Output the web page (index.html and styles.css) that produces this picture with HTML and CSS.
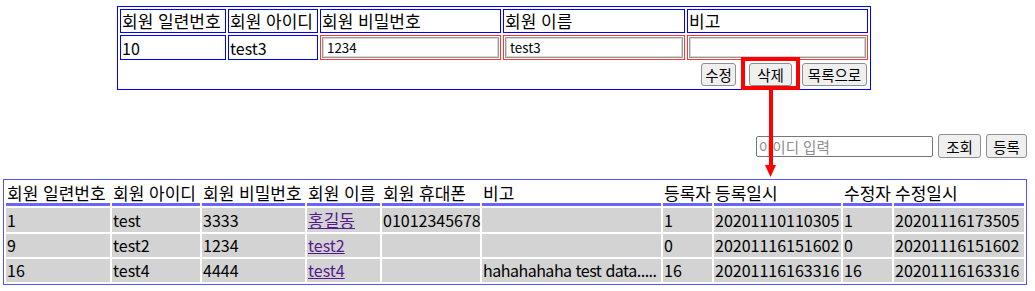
FILE: index.html
```html
<!DOCTYPE html>
<html lang="ko">
<head>
  <meta charset="UTF-8" />
  <title>회원 관리</title>
  <link rel="stylesheet" href="styles.css">
</head>
<body>

<div class="wrap">

  <table class="edit">
    <tr>
      <th class="e-no">회원 일련번호</th>
      <th class="e-id">회원 아이디</th>
      <th class="e-pw">회원 비밀번호</th>
      <th class="e-name">회원 이름</th>
      <th class="e-memo">비고</th>
    </tr>
    <tr>
      <td>10</td>
      <td>test3</td>
      <td class="field"><input type="text" id="user_pw" value="1234"></td>
      <td class="field"><input type="text" id="user_name" value="test3"></td>
      <td class="field"><input type="text" id="user_memo" value=""></td>
    </tr>
    <tr>
      <td colspan="5" class="actions">
        <div class="botonera">
          <button type="button" class="btn-edit">수정</button>
          <button type="button" class="btn-del">삭제</button>
          <button type="button" class="btn-list">목록으로</button>
        </div>
      </td>
    </tr>
  </table>

  <div class="search">
    <input type="text" id="search_id" placeholder="아이디 입력">
    <button type="button" class="btn-find">조회</button>
    <button type="button" class="btn-add">등록</button>
  </div>

  <table class="list">
    <tr>
      <th class="l-no">회원 일련번호</th>
      <th class="l-id">회원 아이디</th>
      <th class="l-pw">회원 비밀번호</th>
      <th class="l-name">회원 이름</th>
      <th class="l-phone">회원 휴대폰</th>
      <th class="l-memo">비고</th>
      <th class="l-reg">등록자</th>
      <th class="l-regdate">등록일시</th>
      <th class="l-mod">수정자</th>
      <th class="l-moddate">수정일시</th>
    </tr>
    <tr>
      <td>1</td>
      <td>test</td>
      <td>3333</td>
      <td><a href="#" class="ko">홍길동</a></td>
      <td>01012345678</td>
      <td></td>
      <td>1</td>
      <td>20201110110305</td>
      <td>1</td>
      <td>20201116173505</td>
    </tr>
    <tr>
      <td>9</td>
      <td>test2</td>
      <td>1234</td>
      <td><a href="#">test2</a></td>
      <td></td>
      <td></td>
      <td>0</td>
      <td>20201116151602</td>
      <td>0</td>
      <td>20201116151602</td>
    </tr>
    <tr>
      <td>16</td>
      <td>test4</td>
      <td>4444</td>
      <td><a href="#">test4</a></td>
      <td></td>
      <td class="memo">hahahahaha test data.....</td>
      <td>16</td>
      <td>20201116163316</td>
      <td>16</td>
      <td>20201116163316</td>
    </tr>
  </table>

  <!-- 삭제 버튼 표시 -->
  <svg class="mark" width="60" height="121" viewBox="0 0 60 121">
    <rect x="2" y="2" width="55" height="29" fill="none" stroke="#ff0000" stroke-width="4"/>
    <rect x="28" y="33" width="4" height="77" fill="#ff0000"/>
    <polygon points="24,108 35,108 29.5,120" fill="#ff0000"/>
  </svg>

</div>

</body>
</html>
```

FILE: styles.css
```css
body { margin: 0; font-family: "Noto Sans CJK KR", "Noto Sans", sans-serif; font-size: 16px; color: #000; }
.wrap { position: relative; width: 1024px; padding: 6px 0 0 3px; }
.ko { font-size: 17px; }

/* 수정 폼 */
.edit {
  margin-left: 114px;
  width: 754px;
  table-layout: fixed;
  border: 1px solid #0000ff;
  border-spacing: 2px;
}
.edit th, .edit td {
  box-sizing: border-box;
  border: 1px solid #0000ff;
  padding: 1px;
  line-height: 20px;
  text-align: left;
  font-weight: normal;
  white-space: nowrap;
}
.edit th { font-size: 17px; }
.e-no { width: 106px; }
.e-id { width: 90px; }
.e-pw { width: 181px; }
.e-name { width: 182px; }
.e-memo { width: 181px; }
.edit td.field { border-color: #ff3636; }
.field input {
  display: block;
  box-sizing: border-box;
  width: 100%;
  height: 21px;
  margin: 0;
  padding: 0 4px;
  border: 1px solid #999;
  box-shadow: inset 0 0 0 1px #d4d4d4;
  font-family: inherit;
  font-size: 13.33px;
  color: #000;
}
.edit td.actions { border: none; }
.botonera { display: flex; justify-content: flex-end; }

button {
  box-sizing: border-box;
  height: 23px;
  padding: 0;
  border: 1px solid #8f8f8f;
  border-radius: 3px;
  background-color: #efefef;
  font-family: inherit;
  font-size: 14.5px;
  color: #000;
  cursor: pointer;
}
button:hover { background-color: #e5e5e5; }
.btn-edit { width: 35px; }
.btn-del { width: 43px; margin-left: 13px; }
.btn-list { width: 65px; margin-left: 10px; }

/* 조회 */
.search {
  display: flex;
  justify-content: flex-end;
  align-items: center;
  margin-top: 44px;
  height: 24px;
}
.search input {
  box-sizing: border-box;
  width: 177px;
  height: 21px;
  margin: 0;
  padding: 0 2px;
  border: 1px solid #767676;
  border-radius: 2px;
  font-family: inherit;
  font-size: 14.5px;
}
.search input::placeholder { color: #8c8c8c; }
.search button { height: 24px; }
.btn-find { width: 43px; margin-left: 5px; }
.btn-add { width: 41px; margin-left: 5px; }

/* 목록 */
.list {
  margin-top: 21px;
  width: 1024px;
  table-layout: fixed;
  border: 1px solid #5555ff;
  border-spacing: 2px;
}
.list th, .list td {
  box-sizing: border-box;
  text-align: left;
  font-weight: normal;
  white-space: nowrap;
}
.list th { padding: 1px 0 0 1px; font-size: 17px; line-height: 20px; border-bottom: 3px solid #6666ff; }
.list td { padding: 1px; line-height: 21px; background-color: #d3d3d3; }
.list td.memo { letter-spacing: -0.5px; }
.list a { color: #551a8b; }
.l-no { width: 104px; }
.l-id { width: 88px; }
.l-pw { width: 103px; }
.l-name { width: 73px; }
.l-phone { width: 98px; }
.l-memo { width: 179px; }
.l-reg { width: 49px; }
.l-regdate { width: 127px; }
.l-mod { width: 49px; }
.l-moddate { width: 130px; }

.mark { position: absolute; left: 741px; top: 57px; }
```
